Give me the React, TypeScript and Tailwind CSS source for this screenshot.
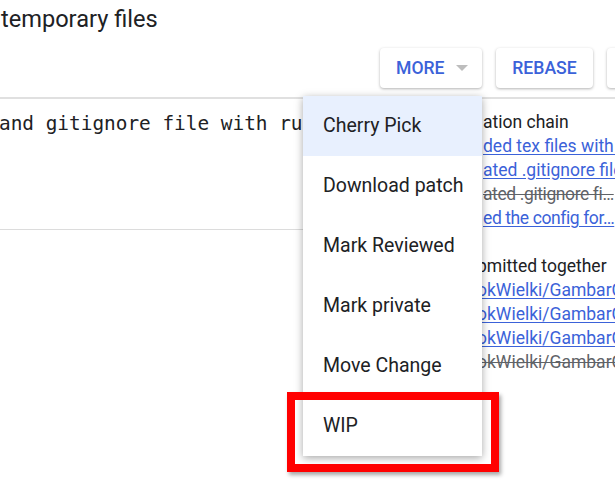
const menuItems = ["Cherry Pick", "Download patch", "Mark Reviewed", "Mark private", "Move Change", "WIP"];

type Row = { pre: string; text: string; kind: "plain" | "link" | "dead"; pw: string; track?: string };

// the left part of each row sits under the open menu
const relation: Row[] = [
  { pre: "Rel", text: "ation chain", kind: "plain", pw: "w-[26px]" },
  { pre: "Ad", text: "ded tex files with templates", kind: "link", pw: "w-[26px]" },
  { pre: "", text: "ated .gitignore file with rules", kind: "link", pw: "w-[26px]" },
  { pre: "", text: "ated .gitignore fi…", kind: "dead", pw: "w-[26px]", track: "tracking-[-0.4px]" },
  { pre: "", text: "ed the config for…", kind: "link", pw: "w-[26px]", track: "tracking-[-0.4px]" },
];

const together: Row[] = [
  { pre: "Su", text: "bmitted together", kind: "plain", pw: "w-[20px]" },
  { pre: "Sm", text: "okWielki/GambarCMS~master~I5e94b", kind: "link", pw: "w-[20px]" },
  { pre: "Sm", text: "okWielki/GambarCMS~master~I0c1a7", kind: "link", pw: "w-[20px]" },
  { pre: "Sm", text: "okWielki/GambarCMS~master~I88d2e", kind: "link", pw: "w-[20px]" },
  { pre: "Sm", text: "okWielki/GambarCMS~master~I3f6b0", kind: "dead", pw: "w-[20px]" },
];

const tone = {
  plain: "text-[#202124]",
  link: "text-[#3b62d9] underline underline-offset-2",
  dead: "text-[#5f6368] line-through",
};

function Line({ row }: { row: Row }) {
  return (
    <div className={`flex whitespace-nowrap ${tone[row.kind]} ${row.track ?? ""}`}>
      <span className={`${row.pw} shrink-0 overflow-hidden`}>{row.pre}</span>
      <span>{row.text}</span>
    </div>
  );
}

export default function App() {
  return (
    <div className="relative w-[615px] h-[502px] overflow-hidden bg-white font-['Roboto',sans-serif] text-[#202124]">
      <div className="pl-[1px] pt-[5px] h-[48px] text-[23.6px] leading-[28px]">temporary files</div>

      <div className="flex gap-[14px] pl-[380px] h-[49px] whitespace-nowrap">
        <button className="flex items-center gap-[11px] w-[102px] h-[40px] shrink-0 pl-[16px] rounded-[4px] bg-white shadow-[0_1px_3px_rgba(0,0,0,0.3)] text-[17.6px] font-medium text-[#3b62d9]">
          MORE
          <span className="w-0 h-0 border-l-[6px] border-r-[6px] border-t-[6px] border-l-transparent border-r-transparent border-t-[#bdbdbd]" />
        </button>
        <button className="w-[97px] h-[40px] shrink-0 rounded-[4px] bg-white shadow-[0_1px_3px_rgba(0,0,0,0.3)] text-[17.6px] font-medium text-[#3b62d9]">
          REBASE
        </button>
        <button className="w-[100px] h-[40px] shrink-0 rounded-[4px] bg-white shadow-[0_1px_3px_rgba(0,0,0,0.3)] text-[17.6px] font-medium text-[#3b62d9]">
          REVERT
        </button>
      </div>

      <div className="h-[2px] bg-[#e0e0e0]" />

      <div className="flex">
        <div className="w-[457px] shrink-0 overflow-hidden">
          <div className="h-[130px] pt-[13px] -ml-px font-['DejaVu_Sans_Mono',monospace] text-[19.4px] leading-[24px] whitespace-nowrap">
            and gitignore file with rules for temporary files
          </div>
          <div className="h-px bg-[#dcdcdc]" />
        </div>

        <div className="pt-[11px] text-[17.5px] leading-[24px]">
          {relation.map((r, i) => (
            <Line key={i} row={r} />
          ))}
          <div className="h-[24px]" />
          {together.map((r, i) => (
            <Line key={i} row={r} />
          ))}
        </div>
      </div>

      {/* dropdown menu */}
      <div className="absolute left-[303px] top-[96px] w-[179px] bg-white shadow-[0_2px_8px_rgba(0,0,0,0.35)]">
        {menuItems.map((m, i) => (
          <div
            key={m}
            className={`h-[60px] flex items-center pl-[20px] text-[19.5px] ${i === 0 ? "bg-[#e8f0fe]" : "bg-white"}`}
          >
            {m}
          </div>
        ))}
      </div>

      {/* highlight box */}
      <div className="absolute left-[287px] top-[392px] w-[212px] h-[80px] border-[8px] border-[#ff0000] shadow-[2px_3px_4px_rgba(0,0,0,0.35)]" />
    </div>
  );
}
